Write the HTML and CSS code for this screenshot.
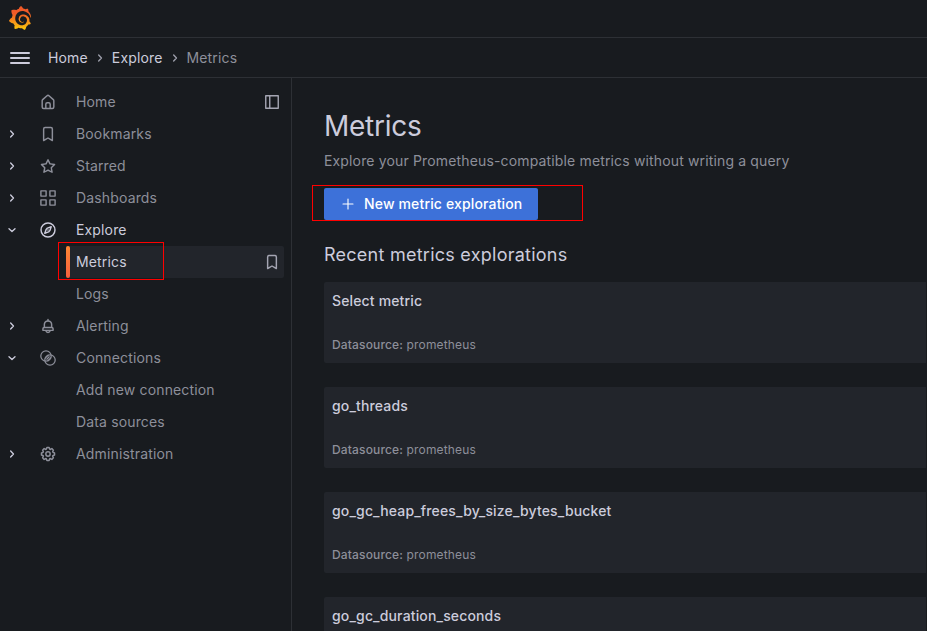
FILE: index.html
```html
<!DOCTYPE html>
<html lang="en">
<head>
<meta charset="utf-8">
<title>Metrics - Explore - Grafana</title>
<link rel="stylesheet" href="styles.css">
</head>
<body>
<svg class="defs" aria-hidden="true">
  <symbol id="right" viewBox="0 0 24 24"><path d="M10 7.5l4.2 4.5-4.2 4.5" fill="none" stroke="currentColor" stroke-width="2" stroke-linecap="round" stroke-linejoin="round"/></symbol>
  <symbol id="down" viewBox="0 0 24 24"><path d="M7.5 10l4.5 4.2 4.5-4.2" fill="none" stroke="currentColor" stroke-width="2" stroke-linecap="round" stroke-linejoin="round"/></symbol>
  <symbol id="bookmark" viewBox="1 1 22 22"><path d="M16,2H8A3,3,0,0,0,5,5V21a1,1,0,0,0,.5.87,1,1,0,0,0,1,0L12,18.69l5.5,3.18A1,1,0,0,0,18,22a1,1,0,0,0,.5-.13A1,1,0,0,0,19,21V5A3,3,0,0,0,16,2Zm1,17.27-4.5-2.6a1,1,0,0,0-1,0L7,19.27V5A1,1,0,0,1,8,4h8a1,1,0,0,1,1,1Z"/></symbol>
</svg>

<header class="topbar">
  <svg class="logo" viewBox="0 0 351 365">
    <defs><linearGradient id="flame" gradientUnits="userSpaceOnUse" x1="175" y1="445" x2="175" y2="114"><stop offset="0" stop-color="#fff100"/><stop offset="1" stop-color="#f05a28"/></linearGradient></defs>
    <path fill="url(#flame)" d="M342,161.2c-0.6-6.1-1.6-13.1-3.6-20.9c-2-7.7-5-16.2-9.4-25c-4.4-8.8-10.1-17.9-17.5-26.8c-2.9-3.5-6.1-6.9-9.5-10.2c5.1-20.3-6.2-37.9-6.2-37.9c-19.5-1.2-31.9,6.1-36.5,9.4c-0.8-0.3-1.5-0.7-2.3-1c-3.3-1.3-6.7-2.6-10.3-3.7c-3.5-1.1-7.1-2.1-10.8-3c-3.7-0.9-7.4-1.6-11.2-2.2c-0.7-0.1-1.3-0.2-2-0.3c-8.5-27.2-32.9-38.6-32.9-38.6c-27.3,17.3-32.4,41.5-32.4,41.5s-0.1,0.5-0.3,1.4c-1.5,0.4-3,0.9-4.5,1.3c-2.1,0.6-4.2,1.4-6.2,2.2c-2.1,0.8-4.1,1.6-6.2,2.5c-4.1,1.8-8.2,3.8-12.2,6c-3.9,2.2-7.7,4.6-11.4,7.1c-0.5-0.2-1-0.4-1-0.4c-37.8-14.4-71.3,2.9-71.3,2.9c-3.1,40.2,15.1,65.5,18.7,70.1c-0.9,2.5-1.7,5-2.5,7.5c-2.8,9.1-4.9,18.4-6.2,28.1c-0.2,1.4-0.4,2.8-0.5,4.2C18.8,192.7,8.5,228,8.5,228c29.1,33.5,63.1,35.6,63.1,35.6c0,0,0.1-0.1,0.1-0.1c4.3,7.7,9.3,15,14.9,21.9c2.4,2.9,4.8,5.6,7.4,8.3c-10.6,30.4,1.5,55.6,1.5,55.6c32.4,1.2,53.7-14.2,58.2-17.7c3.2,1.1,6.5,2.1,9.8,2.9c10,2.6,20.2,4.1,30.4,4.5c2.5,0.1,5.1,0.2,7.6,0.1l1.2,0l0.8,0l1.6,0l1.6-0.1l0,0.1c15.3,21.8,42.1,24.9,42.1,24.9c19.1-20.1,20.2-40.1,20.2-44.4l0,0c0-0.6,0-1.2,0-1.8c4-2.8,7.8-5.8,11.4-9.1c7.6-6.9,14.3-14.8,19.9-23.3c0.5-0.8,1-1.6,1.5-2.4c21.6,1.2,36.9-13.4,36.9-13.4c-3.6-22.5-16.4-33.5-19.1-35.6c-0.3-0.2-0.6-0.4-1-0.8c0.1-1.4,0.2-2.7,0.3-4.1c0.2-2.4,0.2-4.9,0.2-7.3l0-3.8l-0.2-3.5c-0.2-2.6-0.5-5.1-0.9-7.6c-0.4-2.5-0.8-4.9-1.4-7.4c-2.3-9.7-6.1-18.9-11-27.2c-5-8.3-11.2-15.6-18.3-21.8c-7-6.2-14.9-11.2-23.1-14.9c-8.3-3.7-16.9-6.1-25.5-7.2c-4.3-0.6-8.6-0.8-12.9-0.7l-4.8,0.1c-2.8,0.2-5.5,0.6-8.2,1c-8.6,1.6-16.7,4.7-23.8,9c-7.1,4.3-13.3,9.6-18.3,15.6c-5,6-8.9,12.7-11.6,19.6c-2.7,6.9-4.2,14.1-4.6,21c-0.1,1.7-0.1,3.5-0.1,5.2l0.1,2.7c0.1,0.8,0.1,1.7,0.2,2.5c0.3,3.5,1,6.9,1.9,10.1c1.9,6.5,4.9,12.4,8.6,17.4c3.7,5,8.2,9.1,12.9,12.4c4.7,3.2,9.8,5.5,14.8,7c5,1.5,10,2.1,14.7,2.1c3.5,0,6.8-0.3,10-0.9c1.6-0.3,3.2-0.8,4.7-1.3c2-0.7,4-1.5,5.7-2.4c1.8-0.9,3.4-2,5-3c0.4-0.3,0.9-0.6,1.3-1c1.6-1.3,1.9-3.7,0.6-5.3c-1.1-1.4-3.1-1.8-4.7-0.9c-0.4,0.2-0.8,0.4-1.2,0.6c-1.4,0.7-2.8,1.3-4.3,1.8c-1.5,0.5-3.1,0.9-4.7,1.2c-2.3,0.4-4.4,0.5-6.2,0.4c-2-0.1-3.3-0.2-4.6-0.4c-3.7-0.5-7.4-1.6-10.9-3.2c-3.6-1.6-7-3.8-10.1-6.6c-3.1-2.8-5.8-6.1-7.9-9.9c-2.1-3.8-3.6-8-4.3-12.4c-0.3-2.2-0.5-4.5-0.4-6.7c0.1-2.4,0.3-4.7,0.7-7.1c1.7-9.6,6.5-19,13.9-26.1c1.9-1.8,3.9-3.4,6-4.9c2.1-1.5,4.4-2.8,6.8-3.9c2.4-1.1,4.8-2,7.4-2.7c2.5-0.7,5.1-1.1,7.8-1.4c2.8-0.2,5.5-0.2,8.2,0c2.9,0.2,5.7,0.6,8.5,1.3c5.6,1.2,11.1,3.3,16.2,6.1c10.2,5.7,18.9,14.5,24.2,25.1c2.7,5.3,4.6,11,5.5,16.9c0.2,1.5,0.4,3,0.5,4.5l0.2,4.4l-0.1,4.7c-0.1,1.6-0.3,3.3-0.5,4.9c-0.5,3.2-1.1,6.4-1.9,9.5c-0.8,3.1-1.8,6.2-3,9.3c-2.4,6-5.6,11.8-9.4,17.1c-7.7,10.6-18.2,19.2-30.2,24.7c-6,2.7-12.3,4.7-18.8,5.7c-3.2,0.6-6.5,0.9-9.8,1l-5.2,0c-1.8,0-3.5-0.1-5.3-0.3c-7-0.5-13.9-1.8-20.7-3.7c-6.7-1.9-13.2-4.6-19.4-7.8c-12.3-6.6-23.4-15.6-32-26.5c-4.3-5.4-8.1-11.3-11.2-17.4c-3.1-6.1-5.6-12.6-7.4-19.1c-1.8-6.6-2.9-13.3-3.4-20.1l-0.1-4.3l0-5.5c0.1-3.3,0.4-6.8,0.8-10.2c0.4-3.4,1-6.9,1.7-10.3c0.7-3.4,1.5-6.8,2.5-10.2c1.9-6.7,4.3-13.2,7.1-19.3c5.7-12.2,13.1-23.1,22-31.8c2.2-2.2,4.5-4.2,6.9-6.2c2.4-1.9,4.9-3.7,7.5-5.4c2.5-1.7,5.2-3.2,7.9-4.6c2.7-1.4,5.5-2.7,8.3-3.8c2.8-1.2,5.7-2.2,8.7-3.1c2.9-0.9,5.9-1.7,8.9-2.4c3-0.7,6-1.3,9.2-1.7c5-0.7,9.9-1.1,15.5-1.4c2.9-0.1,5.9-0.1,8.8,0c5.8,0.2,11.5,0.9,17,1.9c11.1,2.1,21.5,5.6,31,10.3c9.5,4.6,17.9,10.3,25.3,16.5c3.5,3,6.9,6.3,10.2,9.7c3.1,3.3,6,6.6,8.6,10c5.2,6.7,9.4,13.5,12.7,19.9c1.7,3.2,3.1,6.4,4.4,9.4c1.2,3,2.4,5.9,3.3,8.6c1.5,4.4,2.6,8.3,3.5,11.7c0.3,1.4,1.6,2.3,3,2.1c1.5-0.1,2.6-1.3,2.6-2.8C342.6,170.4,342.5,166.1,342,161.2z"/>
  </svg>
</header>

<nav class="crumbs">
  <span class="menu"><i></i><i></i><i></i></span>
  <a>Home</a><svg class="sep"><use href="#right"/></svg><a>Explore</a><svg class="sep"><use href="#right"/></svg><span class="current">Metrics</span>
</nav>

<div class="body">
  <aside class="sidebar">
    <div class="row">
      <span class="chev"></span>
      <svg class="icon" viewBox="1 1 22 22"><path d="M20,8h0L14,2.74a3,3,0,0,0-4,0L4,8a3,3,0,0,0-1,2.26V19a3,3,0,0,0,3,3H18a3,3,0,0,0,3-3V10.25A3,3,0,0,0,20,8ZM14,20H10V15a1,1,0,0,1,1-1h2a1,1,0,0,1,1,1Zm5-1a1,1,0,0,1-1,1H16V15a3,3,0,0,0-3-3H11a3,3,0,0,0-3,3v5H6a1,1,0,0,1-1-1V10.25a1,1,0,0,1,.34-.75l6-5.25a1,1,0,0,1,1.32,0l6,5.25a1,1,0,0,1,.34.75Z"/></svg>
      <span class="label">Home</span>
      <svg class="end" viewBox="0 0 16 16"><path d="M1.75 1.75h12.5v12.5H1.75zM5.75 2v12" fill="none" stroke="currentColor" stroke-width="1.4" stroke-linejoin="round"/></svg>
    </div>
    <div class="row">
      <svg class="chev"><use href="#right"/></svg>
      <svg class="icon"><use href="#bookmark"/></svg>
      <span class="label">Bookmarks</span>
    </div>
    <div class="row">
      <svg class="chev"><use href="#right"/></svg>
      <svg class="icon" viewBox="1 1 22 22"><path d="M22,9.67A1,1,0,0,0,21.14,9l-5.69-.83L12.9,3a1,1,0,0,0-1.8,0L8.55,8.16,2.86,9a1,1,0,0,0-.81.68,1,1,0,0,0,.25,1l4.13,4-1,5.68A1,1,0,0,0,6.9,21.44L12,18.77l5.1,2.67a.93.93,0,0,0,.46.12,1,1,0,0,0,.59-.19,1,1,0,0,0,.4-1l-1-5.68,4.13-4A1,1,0,0,0,22,9.67Zm-6.15,4a1,1,0,0,0-.29.88l.72,4.2-3.76-2a1.06,1.06,0,0,0-.94,0l-3.76,2,.72-4.2a1,1,0,0,0-.29-.88l-3-3,4.21-.61a1,1,0,0,0,.76-.55L12,5.7l1.88,3.82a1,1,0,0,0,.76.55l4.21.61Z"/></svg>
      <span class="label">Starred</span>
    </div>
    <div class="row">
      <svg class="chev"><use href="#right"/></svg>
      <svg class="icon" viewBox="0 0 16 16"><path d="M.9.9h5.2v5.2H.9zM9.9.9h5.2v5.2H9.9zM.9 9.9h5.2v5.2H.9zM9.9 9.9h5.2v5.2H9.9z" fill="none" stroke="currentColor" stroke-width="1.4" stroke-linejoin="round"/></svg>
      <span class="label">Dashboards</span>
    </div>
    <div class="row active">
      <svg class="chev"><use href="#down"/></svg>
      <svg class="icon" viewBox="1 1 22 22"><g fill="none" stroke="currentColor" stroke-width="2" stroke-linejoin="round"><circle cx="12" cy="12" r="9.6"/><path d="M16.4 7.6l-1.8 5.2-1.8 1.8-5.2 1.8 1.8-5.2 1.8-1.8z"/></g><circle cx="12" cy="12" r="1"/></svg>
      <span class="label">Explore</span>
    </div>
    <div class="row child selected">
      <span class="label">Metrics</span>
      <svg class="end"><use href="#bookmark"/></svg>
      <span class="mark mark-nav"></span>
    </div>
    <div class="row child"><span class="label">Logs</span></div>
    <div class="row">
      <svg class="chev"><use href="#right"/></svg>
      <svg class="icon" viewBox="1 1 22 22"><path d="M18,13.18V10a6,6,0,0,0-5-5.91V3a1,1,0,0,0-2,0V4.09A6,6,0,0,0,6,10v3.18A3,3,0,0,0,4,16v2a1,1,0,0,0,1,1H8.14a4,4,0,0,0,7.72,0H19a1,1,0,0,0,1-1V16A3,3,0,0,0,18,13.18ZM8,10a4,4,0,0,1,8,0v3H8Zm4,10a2,2,0,0,1-1.72-1h3.44A2,2,0,0,1,12,20Zm6-3H6V16a1,1,0,0,1,1-1H17a1,1,0,0,1,1,1Z"/></svg>
      <span class="label">Alerting</span>
    </div>
    <div class="row">
      <svg class="chev"><use href="#down"/></svg>
      <svg class="icon" viewBox="0 0 16 16"><g fill="none" stroke="currentColor" stroke-width="1.25"><circle cx="6" cy="6" r="5.2"/><circle cx="10" cy="10" r="5.2"/><path d="M5.2 8.1l2.9-2.9M7.9 10.8l2.9-2.9M6.8 9.2l2.4-2.4" stroke-linecap="round"/></g></svg>
      <span class="label">Connections</span>
    </div>
    <div class="row child"><span class="label">Add new connection</span></div>
    <div class="row child"><span class="label">Data sources</span></div>
    <div class="row">
      <svg class="chev"><use href="#right"/></svg>
      <svg class="icon" viewBox="1 1 22 22"><path d="M21.32,9.55l-1.89-.63.89-1.78A1,1,0,0,0,20.13,6L18,3.87a1,1,0,0,0-1.15-.19l-1.78.89-.63-1.89A1,1,0,0,0,13.5,2h-3a1,1,0,0,0-.95.68L8.92,4.57,7.14,3.68A1,1,0,0,0,6,3.87L3.87,6a1,1,0,0,0-.19,1.15l.89,1.78-1.89.63A1,1,0,0,0,2,10.5v3a1,1,0,0,0,.68.95l1.89.63-.89,1.78A1,1,0,0,0,3.87,18L6,20.13a1,1,0,0,0,1.15.19l1.78-.89.63,1.89a1,1,0,0,0,.95.68h3a1,1,0,0,0,.95-.68l.63-1.89,1.78.89A1,1,0,0,0,18,20.13L20.13,18a1,1,0,0,0,.19-1.15l-.89-1.78,1.89-.63A1,1,0,0,0,22,13.5v-3A1,1,0,0,0,21.32,9.55ZM20,12.78l-1.2.4A2,2,0,0,0,17.64,16l.57,1.14-1.1,1.1L16,17.64a2,2,0,0,0-2.79,1.16l-.4,1.2H11.22l-.4-1.2A2,2,0,0,0,8,17.64l-1.14.57-1.1-1.1L6.36,16A2,2,0,0,0,5.2,13.18L4,12.78V11.22l1.2-.4A2,2,0,0,0,6.36,8L5.79,6.89l1.1-1.1L8,6.36A2,2,0,0,0,10.82,5.2l.4-1.2h1.56l.4,1.2A2,2,0,0,0,16,6.36l1.14-.57,1.1,1.1L17.64,8a2,2,0,0,0,1.16,2.79l1.2.4ZM12,8a4,4,0,1,0,4,4A4,4,0,0,0,12,8Zm0,6a2,2,0,1,1,2-2A2,2,0,0,1,12,14Z"/></svg>
      <span class="label">Administration</span>
    </div>
  </aside>

  <main class="content">
    <h1>Metrics</h1>
    <p class="subtitle">Explore your Prometheus-compatible metrics without writing a query</p>
    <div class="action">
      <button class="primary"><svg viewBox="0 0 16 16"><path d="M8 3v10M3 8h10" stroke="currentColor" stroke-width="1.1" stroke-linecap="round"/></svg>New metric exploration</button>
      <span class="mark mark-action"></span>
    </div>
    <h2>Recent metrics explorations</h2>
    <div class="cards">
      <article class="card"><h3>Select metric</h3><p><b>Datasource:</b> prometheus</p></article>
      <article class="card"><h3>go_threads</h3><p><b>Datasource:</b> prometheus</p></article>
      <article class="card"><h3>go_gc_heap_frees_by_size_bytes_bucket</h3><p><b>Datasource:</b> prometheus</p></article>
      <article class="card"><h3>go_gc_duration_seconds</h3></article>
    </div>
  </main>
</div>
</body>
</html>
```

FILE: styles.css
```css
* { box-sizing: border-box; }

body {
  margin: 0;
  height: 631px;
  overflow: hidden;
  display: flex;
  flex-direction: column;
  background: #181b1f;
  color: #ccccdc;
  font: 400 14px/22px Inter, "Liberation Sans", sans-serif;
  letter-spacing: 0.15px;
}

h1, h2, h3, p { margin: 0; }
svg { display: block; fill: currentColor; flex: none; }
.defs { position: absolute; width: 0; height: 0; }

.topbar {
  flex: none;
  height: 38px;
  padding: 6px 8px;
  border-bottom: 1px solid #2d3035;
}
.logo { width: 24px; height: 24px; }

.crumbs {
  flex: none;
  display: flex;
  align-items: center;
  height: 40px;
  padding-left: 10px;
  border-bottom: 1px solid #2d3035;
}
.menu { display: flex; flex-direction: column; gap: 3px; width: 20px; margin-right: 18px; }
.menu i { height: 2px; border-radius: 1px; background: #ccccdc; }
.crumbs a { font-weight: 400; }
.sep { width: 16px; height: 16px; margin: 1px 4px 0; color: #9d9fab; }
.current { color: #8d8f9a; }

.body { flex: 1; display: flex; min-height: 0; }

.sidebar {
  flex: none;
  width: 292px;
  padding: 8px 7px 0 4px;
  border-right: 1px solid #2d3035;
  color: #8d8f9a;
}
.row { display: flex; align-items: center; height: 32px; padding-right: 4px; }
.chev { width: 16px; height: 16px; color: #ccccdc; }
.icon { width: 16px; height: 16px; margin: 0 20px; }
.label { flex: 1; }
.end { width: 16px; height: 16px; color: #a4a5b2; }
.active { color: #ccccdc; }
.child { margin-left: 62px; padding-left: 10px; }
.selected {
  position: relative;
  background: #22252b;
  color: #ccccdc;
  border-radius: 2px;
}
.selected::before {
  content: "";
  position: absolute;
  left: 0;
  top: 0;
  width: 4px;
  height: 32px;
  border-radius: 2px;
  background: linear-gradient(#ff8833, #f55f3e);
}

.mark { position: absolute; border: 1px solid #f00; }
.mark-nav { left: -8px; top: -4px; width: 106px; height: 38px; }
.mark-action { left: -12px; top: -3px; width: 271px; height: 36px; }

.content { flex: 1; min-width: 0; padding: 32px 1px 0 32px; overflow: hidden; }
h1 { font-size: 28px; font-weight: 400; line-height: 32px; letter-spacing: -0.25px; }
.subtitle { margin-top: 8px; color: #8d8f9a; }
.action { position: relative; margin-top: 16px; }
.primary {
  display: flex;
  align-items: center;
  gap: 8px;
  width: 214px;
  height: 32px;
  padding: 0 16px;
  border: 0;
  border-radius: 2px;
  background: #3d71d9;
  color: #fff;
  font: 500 14px/22px Inter, "Liberation Sans", sans-serif;
  letter-spacing: 0.15px;
  white-space: nowrap;
}
.primary svg { width: 16px; height: 16px; }
h2 { margin-top: 24px; font-size: 18px; font-weight: 400; line-height: 22px; letter-spacing: 0.25px; }
.cards { display: flex; flex-direction: column; gap: 24px; margin-top: 16px; }
.card {
  flex: none;
  height: 81px;
  padding: 8px;
  display: flex;
  flex-direction: column;
  justify-content: space-between;
  background: #22252b;
  border-radius: 2px 0 0 2px;
}
.card h3 { font-size: 14px; font-weight: 500; line-height: 22px; }
.card p { font-size: 12px; line-height: 20px; color: #8d8f9a; }
.card b { font-weight: 500; }
```
